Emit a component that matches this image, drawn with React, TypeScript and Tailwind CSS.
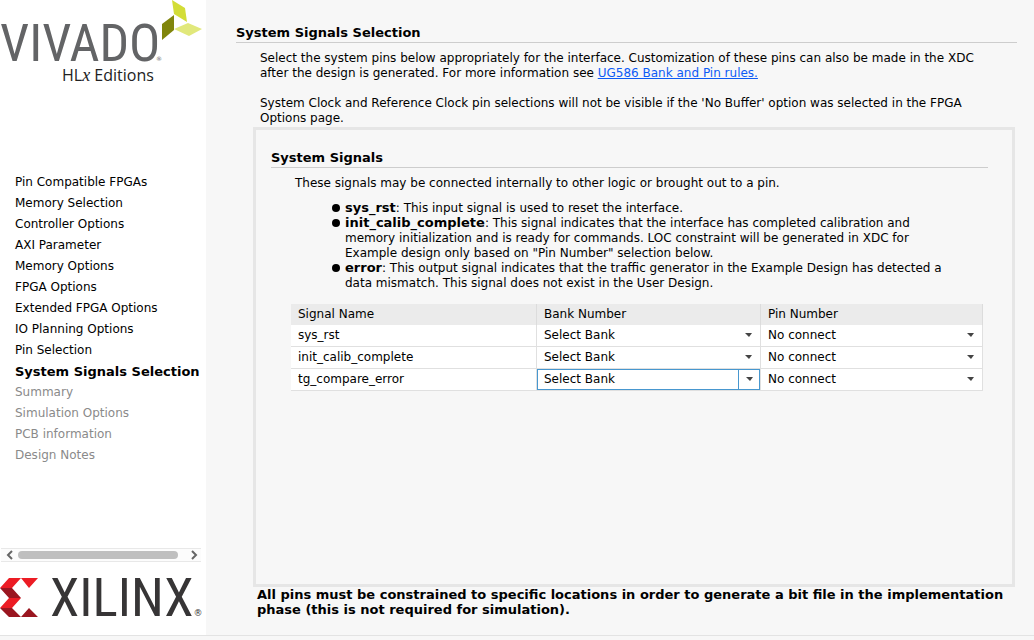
import React, { useState } from "react";

const steps = [
  "Pin Compatible FPGAs",
  "Memory Selection",
  "Controller Options",
  "AXI Parameter",
  "Memory Options",
  "FPGA Options",
  "Extended FPGA Options",
  "IO Planning Options",
  "Pin Selection",
  "System Signals Selection",
  "Summary",
  "Simulation Options",
  "PCB information",
  "Design Notes",
];

const currentStep = 9;

const signals = ["sys_rst", "init_calib_complete", "tg_compare_error"];

function VivadoLogo() {
  return (
    <div className="relative h-[90px] text-[#636466]">
      <div className="pt-5 font-['Liberation_Sans_Narrow','Roboto_Condensed',sans-serif] text-[52px] leading-[48px]">
        VIVADO
      </div>
      <div className="pl-[62px] font-['Open_Sans',sans-serif] text-[16px] leading-[14px] text-[#222]">
        HL<i className="font-['Liberation_Serif',serif] text-[18px] leading-[14px]">x</i> Editions
      </div>
      <span className="absolute top-[54px] left-[156px] text-[6px] leading-[10px]">®</span>
      <svg className="absolute top-0 left-[162px]" width="40" height="40" viewBox="0 0 40 40" aria-hidden="true">
        <path d="M10 0 23 8 25 22 12 14Z" fill="#d3dd37" />
        <path d="M0 24 12 15V30L0 40Z" fill="#80850b" />
        <path d="M12 29 26 23 40 29 27 36Z" fill="#e1e87b" />
      </svg>
    </div>
  );
}

function XilinxLogo() {
  return (
    <div className="mt-4 flex h-[57px] items-start text-[#373536]">
      <svg className="shrink-0" width="38" height="40" viewBox="0 0 38 40" aria-hidden="true">
        <path d="M9 0H21L12 10H0ZM9 20H21L12 30H0ZM21 0H38L29 10Z" fill="#ec1c24" />
        <path d="M0 10H12L21 20H9ZM0 30H12L21 39H9ZM21 39 29 30 38 39Z" fill="#9a1620" />
      </svg>
      <span className="ml-3 font-['Liberation_Sans_Narrow','Roboto_Condensed',sans-serif] text-[53px] leading-[40px]">
        XILINX
      </span>
      <span className="pt-[30px] text-[9px] leading-[10px]">®</span>
    </div>
  );
}

function ScrollBar() {
  return (
    <div className="mr-[5px] ml-px flex h-[14px] items-center border-y border-[#e8e8e8] bg-[#fcfcfc]">
      <button type="button" aria-label="Scroll left" className="flex w-[17px] shrink-0 justify-center">
        <svg width="8" height="10" viewBox="0 0 8 10" fill="none" stroke="#666" strokeWidth="2">
          <path d="M6 1 2 5 6 9" />
        </svg>
      </button>
      <div className="flex-1">
        <div className="h-2 w-[160px] rounded-full bg-[#bfbfbf]" />
      </div>
      <button type="button" aria-label="Scroll right" className="flex w-[14px] shrink-0 justify-center">
        <svg width="8" height="10" viewBox="0 0 8 10" fill="none" stroke="#666" strokeWidth="2">
          <path d="M2 1 6 5 2 9" />
        </svg>
      </button>
    </div>
  );
}

function CellSelect({ label, value, active }: { label: string; value: string; active?: boolean }) {
  const [current, setCurrent] = useState(value);
  return (
    <div className={active ? "relative flex border border-[#4797cf]" : "relative flex border border-transparent"}>
      <select
        aria-label={label}
        value={current}
        onChange={(e) => setCurrent(e.target.value)}
        className="h-[19px] w-full appearance-none bg-transparent pr-6 pb-px pl-[6px] leading-[15px] outline-none"
      >
        <option>{value}</option>
      </select>
      <span
        className={
          active
            ? "pointer-events-none absolute inset-y-0 right-0 flex w-[21px] items-center justify-center border-l border-[#4797cf] pb-px"
            : "pointer-events-none absolute inset-y-0 right-0 flex w-[21px] items-center justify-center pb-px"
        }
      >
        <svg width="7" height="4" viewBox="0 0 7 4" aria-hidden="true">
          <path d="M0 0H7L4 4Z" fill="#444" />
        </svg>
      </span>
    </div>
  );
}

const notes = [
  { name: "sys_rst", text: "This input signal is used to reset the interface." },
  {
    name: "init_calib_complete",
    text: 'This signal indicates that the interface has completed calibration and memory initialization and is ready for commands. LOC constraint will be generated in XDC for Example design only based on "Pin Number" selection below.',
  },
  {
    name: "error",
    text: "This output signal indicates that the traffic generator in the Example Design has detected a data mismatch. This signal does not exist in the User Design.",
  },
];

export default function App() {
  return (
    <div className="flex min-h-screen flex-col bg-[#f7f7f7] font-['DejaVu_Sans',sans-serif] text-[12px] leading-[15px] text-black">
      <div className="flex flex-1 border-b border-[#e3e3e3]">
        <aside className="flex w-[206px] shrink-0 flex-col bg-white">
          <VivadoLogo />
          <nav aria-label="Wizard steps" className="mt-[82px] flex-1">
            <ol>
              {steps.map((step, i) => (
                <li
                  key={step}
                  aria-current={i === currentStep ? "step" : undefined}
                  className={
                    i === currentStep
                      ? "pl-[15px] text-[13px] leading-[21px] font-bold whitespace-nowrap"
                      : i > currentStep
                        ? "pl-[15px] leading-[21px] text-[#8a8a8a]"
                        : "pl-[15px] leading-[21px]"
                  }
                >
                  {step}
                </li>
              ))}
            </ol>
          </nav>
          <ScrollBar />
          <XilinxLogo />
        </aside>

        <main className="flex flex-1 flex-col pt-[25px] pr-[17px] pb-[18px] pl-[30px]">
          <h1 className="border-b border-[#cdcdcd] pb-[2px] text-[13px] leading-[15px] font-bold">
            System Signals Selection
          </h1>
          <div className="pt-2 pr-8 pl-6">
            <p>
              Select the system pins below appropriately for the interface. Customization of these pins can also be made
              in the XDC after the design is generated. For more information see{" "}
              <a href="#ug586" className="text-[#0d5bf5] underline">
                UG586 Bank and Pin rules.
              </a>
            </p>
            <p className="mt-[15px]">
              System Clock and Reference Clock pin selections will not be visible if the 'No Buffer' option was selected
              in the FPGA Options page.
            </p>
          </div>

          <section className="mt-px mr-[2px] ml-[17px] flex-1 border-3 border-[#e6e6e6] pt-5 pr-6 pl-[15px]">
            <h2 className="border-b border-[#cdcdcd] pb-[2px] text-[13px] leading-[15px] font-bold">System Signals</h2>
            <p className="mt-2 pl-6">
              These signals may be connected internally to other logic or brought out to a pin.
            </p>
            <ul className="mt-[10px] mr-8 pl-[74px]">
              {notes.map((note) => (
                <li key={note.name} className="relative">
                  <span className="absolute top-[3px] -left-[13px] size-2 rounded-full bg-black" />
                  <b className="text-[13px] leading-none">{note.name}</b>: {note.text}
                </li>
              ))}
            </ul>
            <div className="mt-[13px] mr-[5px] ml-5">
              <table className="w-full table-fixed border-separate border-spacing-0 bg-white">
                <colgroup>
                  <col className="w-[246px]" />
                  <col className="w-[224px]" />
                  <col />
                </colgroup>
                <thead>
                  <tr className="h-[21px] bg-[#ebebeb] text-left">
                    {["Signal Name", "Bank Number", "Pin Number"].map((h) => (
                      <th key={h} scope="col" className="border-r border-[#dcdcdc] py-0 pl-[7px] font-normal">
                        {h}
                      </th>
                    ))}
                  </tr>
                </thead>
                <tbody>
                  {signals.map((name, i) => (
                    <tr key={name} className="h-[22px]">
                      <td className="border-r border-b border-[#e0e0e0] py-0 pl-[7px]">{name}</td>
                      <td className="border-r border-b border-[#e0e0e0] p-0">
                        <CellSelect label={name + " bank number"} value="Select Bank" active={i === 2} />
                      </td>
                      <td className="border-r border-b border-[#e0e0e0] p-0">
                        <CellSelect label={name + " pin number"} value="No connect" />
                      </td>
                    </tr>
                  ))}
                </tbody>
              </table>
            </div>
          </section>

          <p className="mr-3 ml-[21px] text-[13px] leading-[15px] font-bold">
            All pins must be constrained to specific locations in order to generate a bit file in the implementation
            phase (this is not required for simulation).
          </p>
        </main>
      </div>
      <div className="h-1" />
    </div>
  );
}
